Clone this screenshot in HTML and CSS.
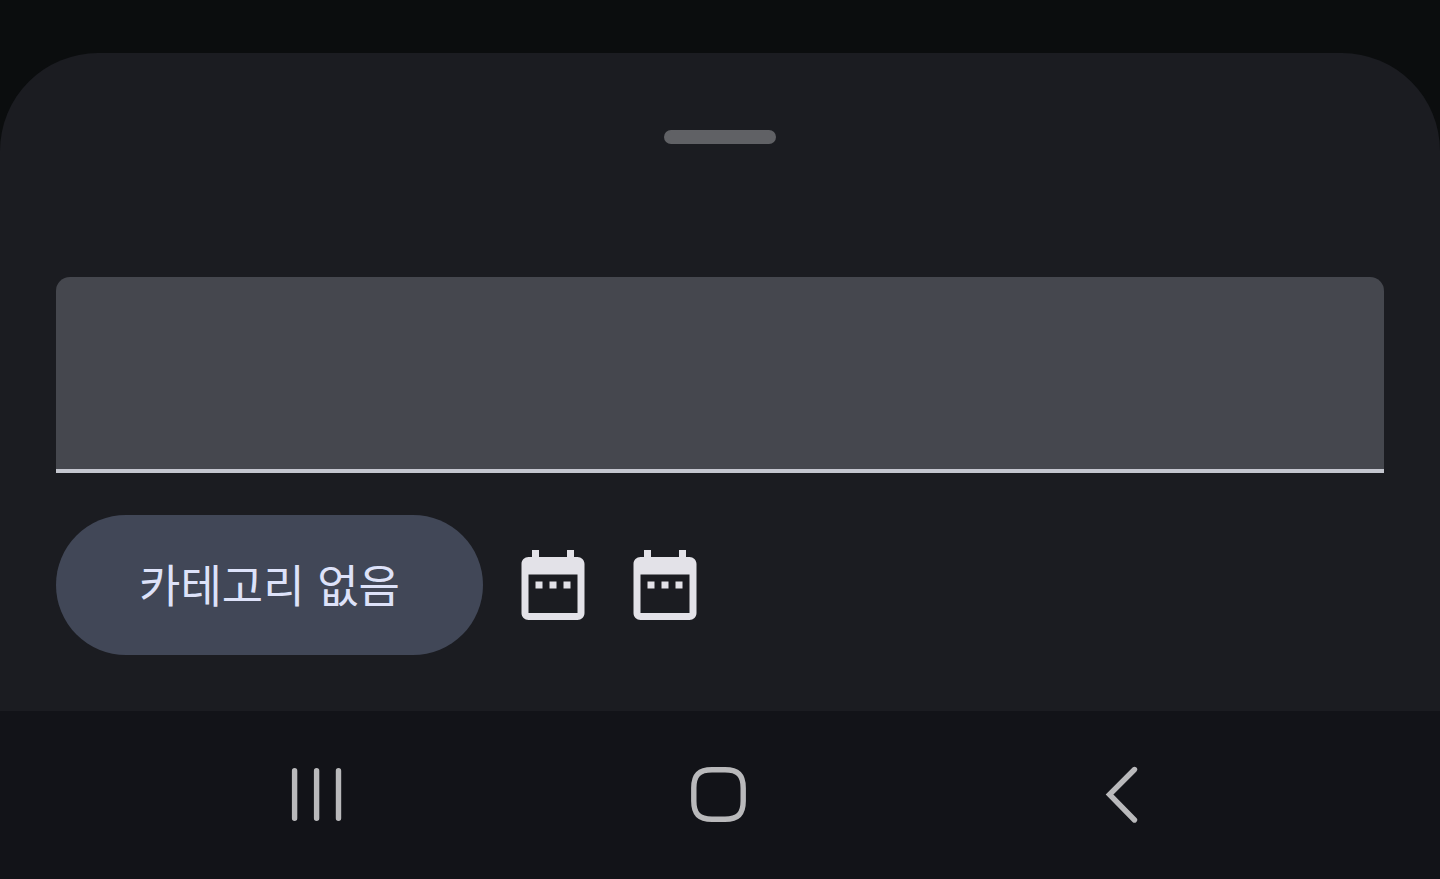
FILE: index.html
```html
<!DOCTYPE html>
<html lang="ko">

<head>
    <meta charset="utf-8">
    <meta name="viewport" content="width=device-width, initial-scale=1.0">
    <title>카테고리 없음</title>
    <link rel="stylesheet" href="styles.css">
</head>

<body>
    <main class="sheet">
        <div class="handle"></div>
        <input class="title-input" type="text" aria-label="제목">
        <div class="options">
            <button class="category" type="button">카테고리 없음</button>
            <button class="icon-button" type="button" aria-label="시작 날짜">
                <svg viewBox="0 0 24 24">
                    <path d="M9 11H7v2h2v-2zm4 0h-2v2h2v-2zm4 0h-2v2h2v-2zm2-7h-1V2h-2v2H8V2H6v2H5c-1.110 0-2 .9-2 2v14c0 1.100.89 2 2 2h14c1.100 0 2-.9 2-2V6c0-1.100-.9-2-2-2zm0 16H5V9h14v11z" />
                </svg>
            </button>
            <button class="icon-button" type="button" aria-label="종료 날짜">
                <svg viewBox="0 0 24 24">
                    <path d="M9 11H7v2h2v-2zm4 0h-2v2h2v-2zm4 0h-2v2h2v-2zm2-7h-1V2h-2v2H8V2H6v2H5c-1.110 0-2 .9-2 2v14c0 1.100.89 2 2 2h14c1.100 0 2-.9 2-2V6c0-1.100-.9-2-2-2zm0 16H5V9h14v11z" />
                </svg>
            </button>
        </div>
    </main>

    <nav class="system-nav">
        <button type="button" aria-label="최근 앱">
            <svg viewBox="0 0 56 56">
                <path d="M5.600 3.700v47.600M27.600 3.700v47.600M49.500 3.700v47.600" />
            </svg>
        </button>
        <button type="button" aria-label="홈">
            <svg viewBox="0 0 56 56">
                <path d="M20 2.800h13C46 2.800 51.200 8 51.200 21v13C51.200 47 46 52.200 33 52.200H20C7 52.200 1.800 47 1.800 34V21C1.800 8 7 2.800 20 2.800z" />
            </svg>
        </button>
        <button type="button" aria-label="뒤로">
            <svg viewBox="0 0 56 56">
                <path d="M39.500 2.500 14.500 27.500 39.500 53" />
            </svg>
        </button>
    </nav>
</body>

</html>
```

FILE: styles.css
```css
* {
    box-sizing: border-box;
}

body {
    display: flex;
    flex-direction: column;
    min-height: 100vh;
    margin: 0;
    padding-top: 53px;
    background: #0b0d0e;
    font-family: "Noto Sans CJK KR", sans-serif;
}

button {
    border: none;
    padding: 0;
    background: none;
    cursor: pointer;
}

svg {
    display: block;
    width: 100%;
    height: 100%;
    overflow: visible;
}

.sheet {
    display: flex;
    flex-direction: column;
    padding: 77px 56px 56px;
    border-radius: 98px 98px 0 0;
    background: #1b1c21;
}

.handle {
    align-self: center;
    width: 112px;
    height: 14px;
    border-radius: 7px;
    background: #606165;
}

.title-input {
    width: 100%;
    height: 196px;
    margin-top: 133px;
    padding: 28px 56px;
    border: none;
    border-bottom: 4px solid #c4c6cf;
    border-radius: 14px 14px 0 0;
    outline: none;
    background: #45474e;
    color: #e3e2e8;
    font-family: inherit;
    font-size: 56px;
}

.options {
    display: flex;
    align-items: center;
    gap: 28px;
    margin-top: 42px;
}

.category {
    height: 140px;
    padding: 0 83px 4px;
    border-radius: 70px;
    background: #414757;
    color: #dde2f9;
    font-family: inherit;
    font-size: 45px;
    font-weight: 400;
}

.icon-button {
    width: 84px;
    height: 84px;
    fill: #e3e2e8;
}

.system-nav {
    display: grid;
    flex: 1;
    grid-template-columns: repeat(3, 28%);
    justify-content: center;
    justify-items: center;
    align-items: start;
    padding: 56px 0;
    background: #121318;
}

.system-nav button {
    width: 56px;
    height: 56px;
    fill: none;
    stroke: #b9b9bb;
    stroke-width: 5.400;
    stroke-linecap: round;
}
```
